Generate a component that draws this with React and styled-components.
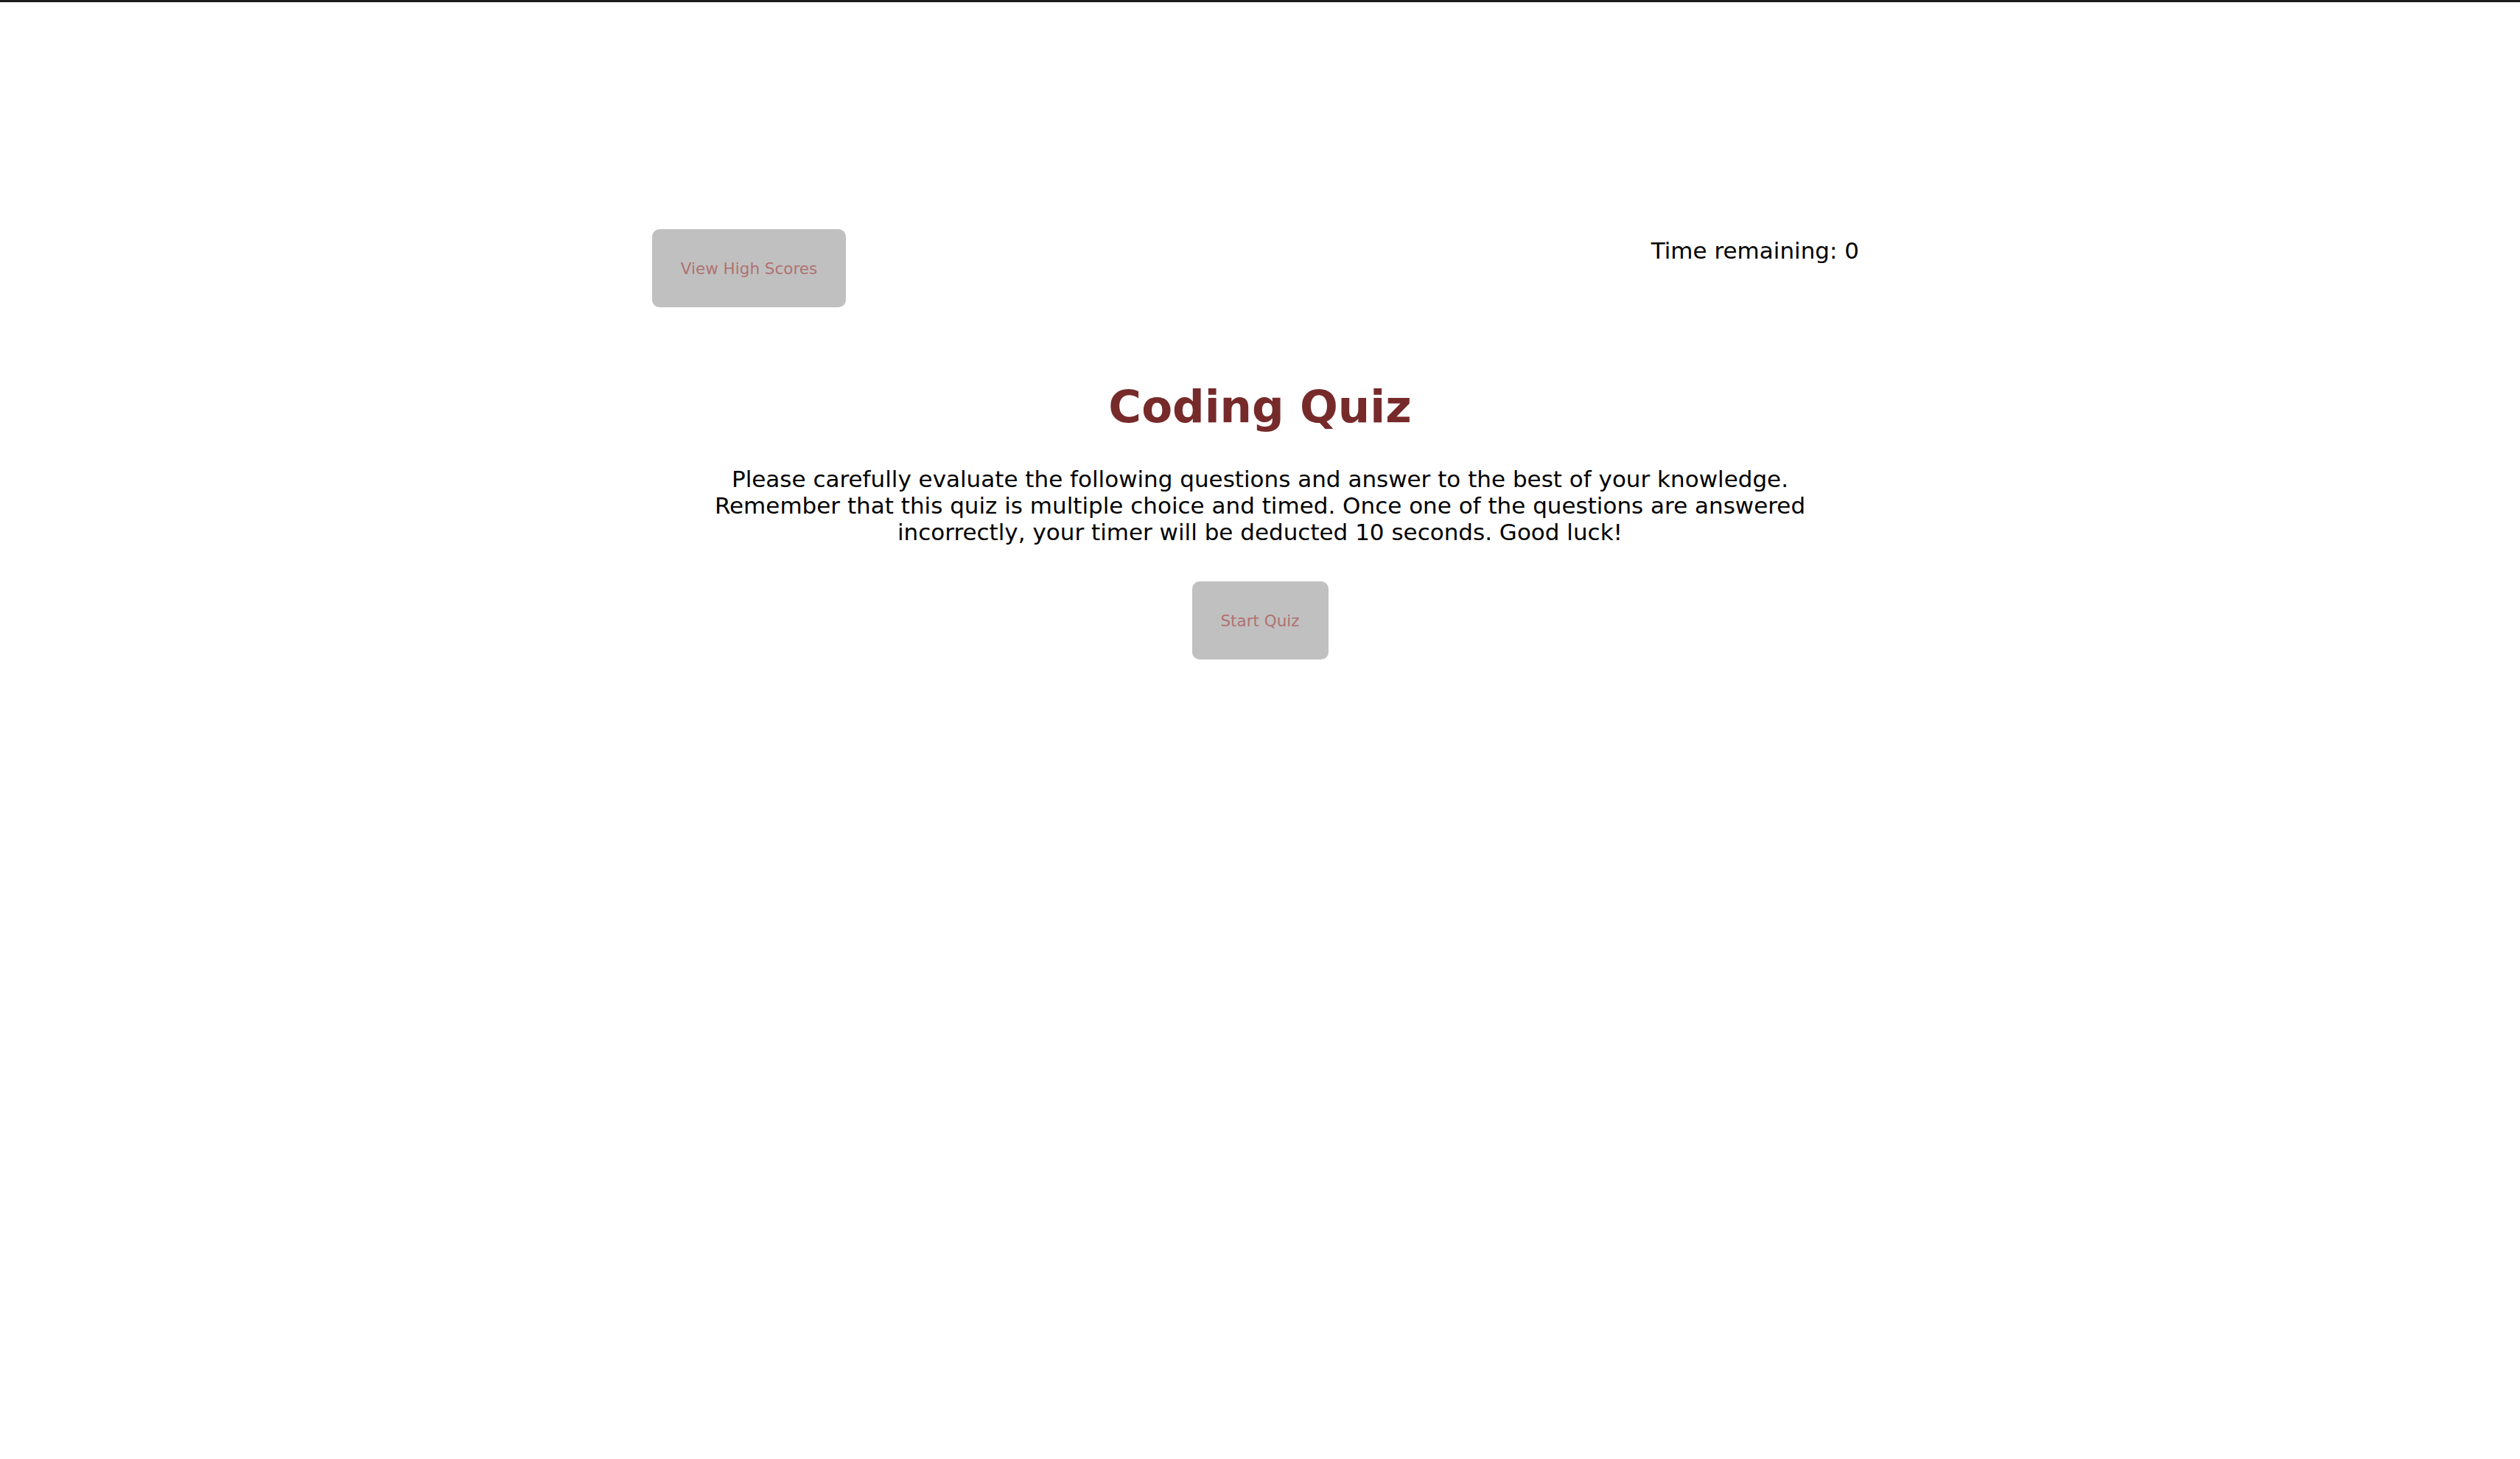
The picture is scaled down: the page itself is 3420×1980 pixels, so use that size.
import React from 'react';
import styled, { createGlobalStyle } from 'styled-components';

const maroon = '#772a2a';

const GlobalStyle = createGlobalStyle`
  html, body {
    margin: 0;
    padding: 0;
    background: #fff;
  }
  body {
    border-top: 3px solid #1c1c1c;
    font-family: "DejaVu Sans", "Lucida Grande", sans-serif;
    color: #000;
  }
`;

const Page = styled.div`
  width: 1650px;
  margin: 0 auto;
  padding-top: 308px;
`;

const Header = styled.header`
  display: flex;
  justify-content: space-between;
  align-items: flex-start;
`;

const Button = styled.button`
  background: #c0c0c0;
  color: #b07272;
  border: none;
  border-radius: 10px;
  font-family: "DejaVu Sans", "Lucida Grande", sans-serif;
  font-size: 21.5px;
  height: 106px;
  width: ${(p) => p.width}px;
  padding: 0;
  cursor: pointer;
`;

const Timer = styled.div`
  font-size: 31px;
  margin-top: 11px;
  margin-right: 12px;
`;

const Main = styled.main`
  display: flex;
  flex-direction: column;
  align-items: center;
  text-align: center;
`;

const Title = styled.h1`
  color: ${maroon};
  font-size: 61px;
  font-weight: bold;
  margin: 98px 0 0;
  line-height: 1.2;
`;

const Intro = styled.p`
  font-size: 31px;
  line-height: 36px;
  width: 1560px;
  margin: 44px 0 49px;
`;

export default function App() {
  return (
    <>
      <GlobalStyle />
      <Page>
        <Header>
          <Button width={263}>View High Scores</Button>
          <Timer>Time remaining: 0</Timer>
        </Header>
        <Main>
          <Title>Coding Quiz</Title>
          <Intro>
            Please carefully evaluate the following questions and answer to the best of your knowledge.
            <br />
            Remember that this quiz is multiple choice and timed. Once one of the questions are answered
            <br />
            incorrectly, your timer will be deducted 10 seconds. Good luck!
          </Intro>
          <Button width={185}>Start Quiz</Button>
        </Main>
      </Page>
    </>
  );
}
